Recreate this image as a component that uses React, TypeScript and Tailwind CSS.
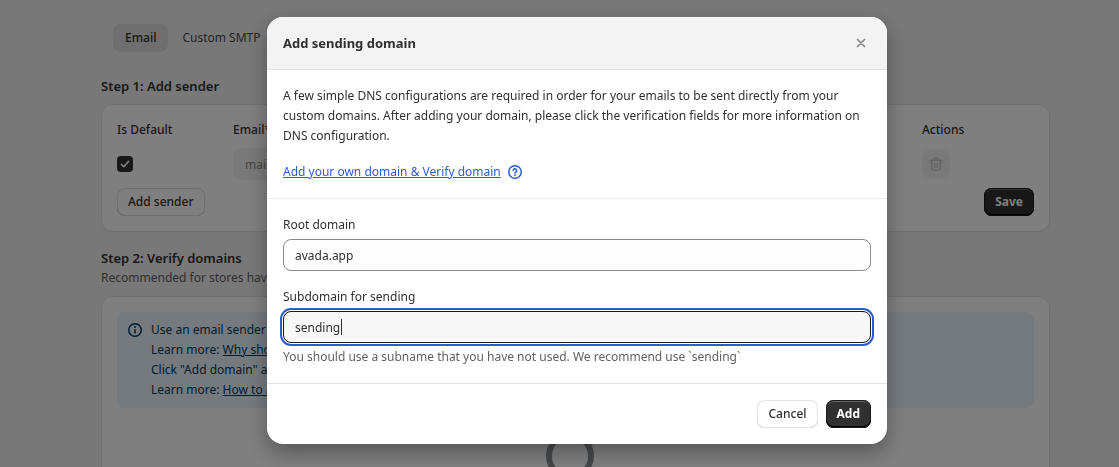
import { useState, type ReactNode } from "react";

const secondaryButton =
  "h-7 rounded-lg bg-white px-[11px] text-xs font-medium text-[#303030] shadow-[inset_0_0_0_1px_#e3e3e3,inset_0_-1px_0_0_#b5b5b5]";
const primaryButton =
  "h-7 rounded-lg bg-[#303030] px-[11px] text-xs font-bold text-white shadow-[inset_0_0_0_1px_#1a1a1a,inset_0_-2px_0_0_#000,inset_0_2px_0_0_#666]";
const cardClass = "rounded-xl bg-white px-4 pt-4 shadow-[inset_0_0_0_1px_#e3e3e3,inset_0_-1px_0_0_#ccc]";

function InfoIcon() {
  return (
    <svg viewBox="0 0 20 20" className="h-5 w-5 shrink-0" fill="none" stroke="currentColor" strokeWidth="1.5" strokeLinecap="round" aria-hidden="true">
      <circle cx="10" cy="10" r="6.25" />
      <path d="M10 9.75v3.25" />
      <circle cx="10" cy="7" r="1" fill="currentColor" stroke="none" />
    </svg>
  );
}

function QuestionIcon() {
  return (
    <svg viewBox="0 0 20 20" className="h-5 w-5 shrink-0" fill="none" stroke="currentColor" strokeWidth="1.5" strokeLinecap="round" strokeLinejoin="round" aria-hidden="true">
      <circle cx="10" cy="10" r="6.25" />
      <path d="M8.25 8.5a1.75 1.75 0 1 1 2.6 1.5c-.5.3-.85.5-.85 1" />
      <circle cx="10" cy="13" r=".9" fill="currentColor" stroke="none" />
    </svg>
  );
}

function TrashIcon() {
  return (
    <svg viewBox="0 0 20 20" className="h-5 w-5" fill="none" stroke="currentColor" strokeWidth="1.5" strokeLinecap="round" strokeLinejoin="round" aria-hidden="true">
      <path d="M4.25 6.25h11.5" />
      <path d="M7.75 6a2.25 2.25 0 0 1 4.5 0" />
      <path d="M5.75 6.5v7.25a2.5 2.5 0 0 0 2.5 2.5h3.5a2.5 2.5 0 0 0 2.5-2.5v-7.25" />
      <path d="M8.5 9v4.25M11.5 9v4.25" />
    </svg>
  );
}

function CloseIcon() {
  return (
    <svg viewBox="0 0 20 20" className="h-5 w-5" fill="none" stroke="currentColor" strokeWidth="1.75" strokeLinecap="round" aria-hidden="true">
      <path d="m6.5 6.5 7 7M13.5 6.5l-7 7" />
    </svg>
  );
}

function SectionTitle({ children }: { children: ReactNode }) {
  return <h2 className="text-[13px] leading-5 font-semibold text-[#303030]">{children}</h2>;
}

function SenderCard() {
  return (
    <section className={`${cardClass} mt-2 pb-4`}>
      <table className="w-full table-fixed text-left">
        <thead>
          <tr className="h-5 leading-5">
            <th className="w-[116px] p-0 font-medium">Is Default</th>
            <th className="p-0 font-medium">
              Email<span className="text-[#e00000]">*</span>
            </th>
            <th className="w-28 p-0 font-medium">Actions</th>
          </tr>
        </thead>
        <tbody>
          <tr className="h-12">
            <td className="p-0">
              <label className="relative block h-4 w-4">
                <input type="checkbox" defaultChecked aria-label="Is default" className="block h-4 w-4 appearance-none rounded bg-[#303030]" />
                <svg viewBox="0 0 16 16" className="pointer-events-none absolute inset-0 h-4 w-4" fill="none" stroke="#fff" strokeWidth="1.75" strokeLinecap="round" strokeLinejoin="round" aria-hidden="true">
                  <path d="m4.5 8.5 2.25 2.25L11.5 5.5" />
                </svg>
              </label>
            </td>
            <td className="p-0">
              <input type="text" disabled defaultValue="mail" aria-label="Email" className="block h-8 w-64 rounded-lg bg-[#f2f2f2] px-3 text-[#8a8a8a]" />
            </td>
            <td className="p-0">
              <button type="button" disabled aria-label="Remove sender" className="flex h-7 w-7 items-center justify-center rounded-lg bg-[#f2f2f2] text-[#cccccc]">
                <TrashIcon />
              </button>
            </td>
          </tr>
        </tbody>
      </table>
      <div className="flex justify-between">
        <button type="button" className={secondaryButton}>Add sender</button>
        <button type="button" className={primaryButton}>Save</button>
      </div>
    </section>
  );
}

function DomainCard() {
  return (
    <section className={`${cardClass} mt-2 pb-12`}>
      <div className="flex gap-1.5 rounded-lg bg-[#eaf4ff] p-2 text-[#003a5a]">
        <InfoIcon />
        <div className="leading-5">
          <p>Use an email sender</p>
          <p>Learn more: <a href="#why" className="underline">Why should</a></p>
          <p>Click "Add domain" and</p>
          <p>Learn more: <a href="#how" className="underline">How to add</a></p>
        </div>
      </div>
      <div className="flex justify-center pt-6 pr-3">
        <svg viewBox="0 0 48 48" className="h-12 w-12" fill="none" stroke="#8a8d91" strokeWidth="6" role="img" aria-label="Loading">
          <circle cx="24" cy="24" r="21" />
        </svg>
      </div>
    </section>
  );
}

function AddDomainDialog() {
  const [root, setRoot] = useState("avada.app");
  const [subdomain, setSubdomain] = useState("sending");

  return (
    <div className="fixed inset-0 flex items-center justify-center bg-black/50 pb-1.5 pl-[35px]">
      <div
        role="dialog"
        aria-modal="true"
        aria-labelledby="dialog-title"
        className="w-full max-w-[620px] overflow-hidden rounded-2xl bg-white shadow-[0_8px_20px_0_rgba(26,26,26,0.4)]"
      >
        <header className="flex items-center justify-between border-b border-[#e3e3e3] bg-[#f3f3f3] p-4">
          <h2 id="dialog-title" className="text-[13px] leading-5 font-bold">Add sending domain</h2>
          <button type="button" aria-label="Close" className="text-[#8a8a8a]">
            <CloseIcon />
          </button>
        </header>

        <div className="border-b border-[#ebebeb] p-4">
          <p className="leading-5">
            A few simple DNS configurations are required in order for your emails to be sent directly from your
            custom domains. After adding your domain, please click the verification fields for more information on
            DNS configuration.
          </p>
          <div className="mt-4 flex items-center gap-1 leading-5 text-[#2c5bd3]">
            <a href="#guide" className="underline">Add your own domain &amp; Verify domain</a>
            <QuestionIcon />
          </div>
        </div>

        <form className="p-4 leading-5">
          <label htmlFor="root-domain" className="block">Root domain</label>
          <input
            id="root-domain"
            type="text"
            value={root}
            onChange={(e) => setRoot(e.target.value)}
            className="mt-1 block h-8 w-full rounded-lg border border-[#8a8a8a] bg-[#fdfdfd] px-[11px] outline-none"
          />
          <label htmlFor="subdomain" className="mt-4 block">Subdomain for sending</label>
          <div className="relative mt-1">
            <input
              id="subdomain"
              type="text"
              value={subdomain}
              onChange={(e) => setSubdomain(e.target.value)}
              aria-describedby="subdomain-help"
              className="block h-8 w-full rounded-lg border border-[#1a1a1a] bg-[#f7f7f7] px-[11px] caret-transparent outline-2 outline-offset-1 outline-[#2c5bd3]"
            />
            <span className="absolute top-2 left-[58px] h-4 w-px bg-[#303030]" aria-hidden="true" />
          </div>
          <p id="subdomain-help" className="mt-1 text-[#616161]">
            You should use a subname that you have not used. We recommend use `sending`
          </p>
        </form>

        <footer className="flex justify-end gap-2 border-t border-[#e3e3e3] p-4">
          <button type="button" className={secondaryButton}>Cancel</button>
          <button type="button" className={primaryButton}>Add</button>
        </footer>
      </div>
    </div>
  );
}

export default function App() {
  return (
    <div className="h-screen overflow-hidden bg-[#f1f1f1] pl-8 font-['Noto_Sans',sans-serif] text-xs text-[#303030]">
      <main className="mx-auto max-w-[949px] pt-6">
        <nav className="flex gap-0.5 px-3 text-xs font-medium">
          <button type="button" className="h-7 rounded-lg bg-[#dfdfdf] px-3">Email</button>
          <button type="button" className="h-7 rounded-lg px-3 font-normal text-[#4a4a4a]">Custom SMTP</button>
        </nav>

        <div className="mt-6">
          <SectionTitle>Step 1: Add sender</SectionTitle>
          <SenderCard />
        </div>

        <div className="mt-4">
          <SectionTitle>Step 2: Verify domains</SectionTitle>
          <p className="leading-5 text-[#616161]">Recommended for stores having</p>
          <DomainCard />
        </div>
      </main>

      <AddDomainDialog />
    </div>
  );
}
